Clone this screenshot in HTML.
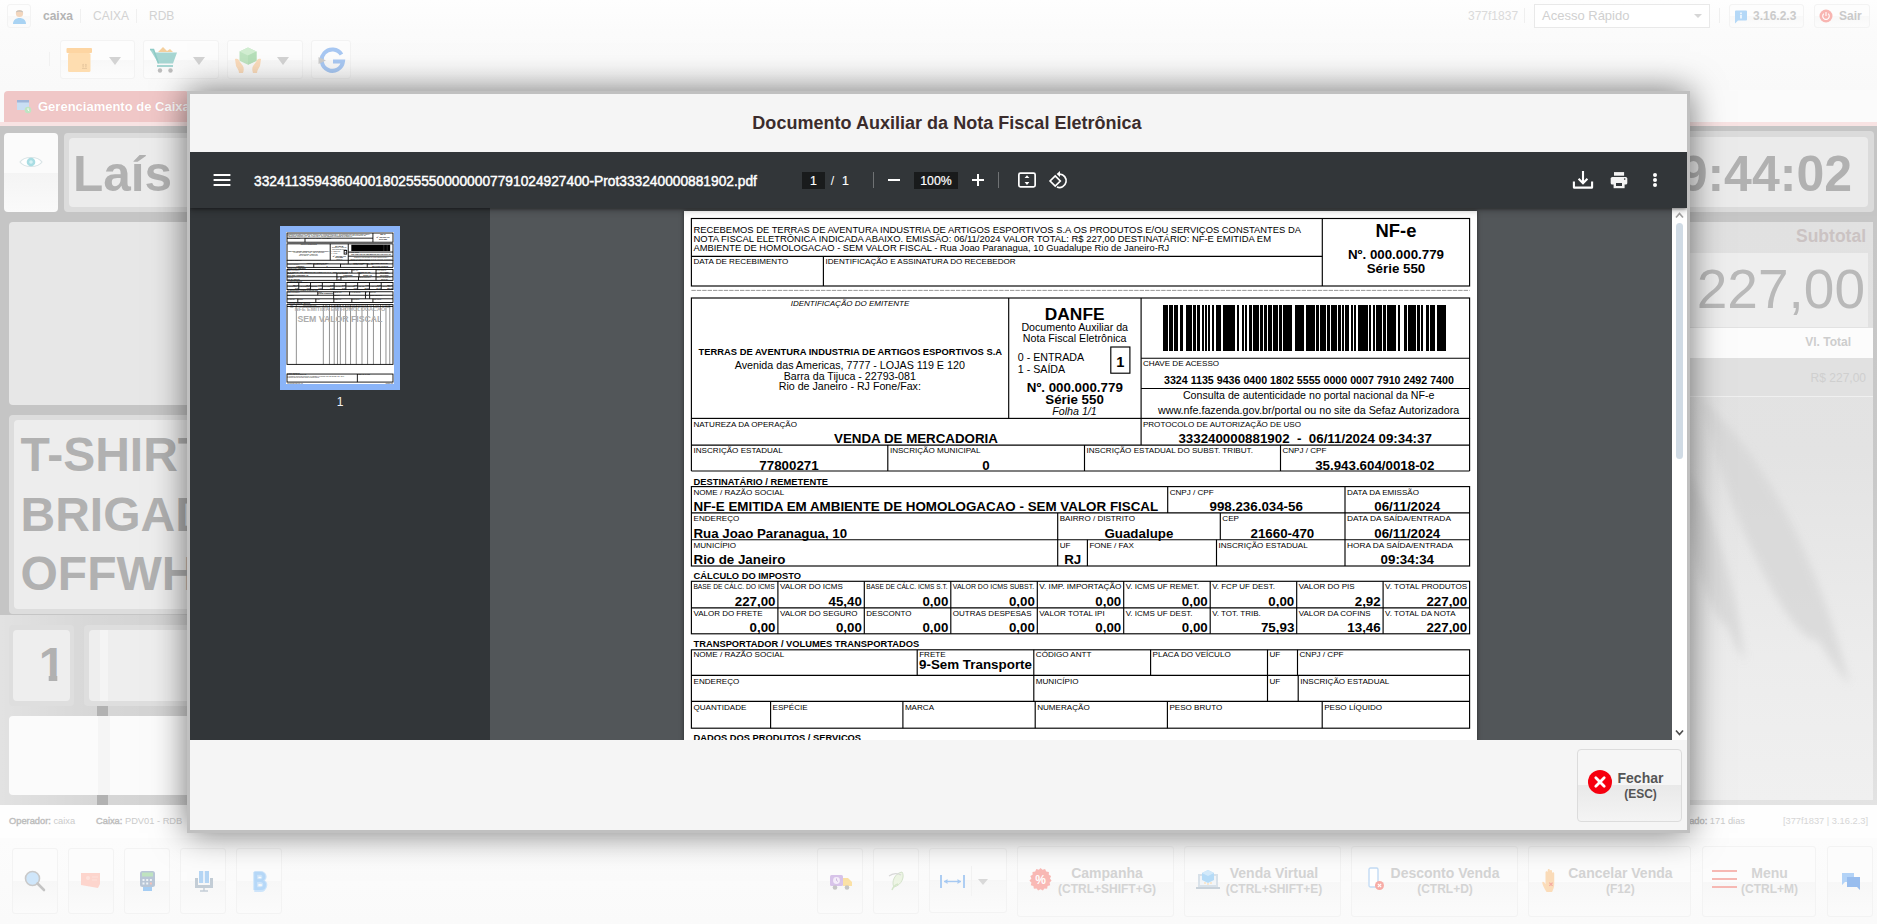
<!DOCTYPE html>
<html lang="pt-BR">
<head>
<meta charset="utf-8">
<title>Documento Auxiliar da Nota Fiscal Eletrônica</title>
<style>
*{box-sizing:border-box;margin:0;padding:0}
html,body{width:1877px;height:924px;overflow:hidden}
body{position:relative;background:#fbfbfb;font-family:"Liberation Sans",Arial,sans-serif;font-size:12px;color:#333}
.a{position:absolute}
svg text{font-family:"Liberation Sans",Arial,sans-serif}

/* ---------- background app (washed out by overlay) ---------- */
#topbar{left:0;top:0;width:1877px;height:32px;background:linear-gradient(#fefefe,#fbfbfb)}
#toolbar{left:0;top:32px;width:1877px;height:58px;background:linear-gradient(#fbfbfb,#f9f9f9)}
.fbtn{border:1px solid #f3f3f3;border-radius:3px;background:linear-gradient(#fdfdfd 0,#fdfdfd 50%,#f8f8f8 50%,#fcfcfc 100%)}
.navtxt{top:8.400px;font-size:12px;line-height:16px;color:#d2d2d2;white-space:nowrap}
.tri{width:0;height:0;border-left:6px solid transparent;border-right:6px solid transparent;border-top:8px solid #d3d3d3}
#tab{left:4px;top:91px;width:185px;overflow:hidden;height:31px;background:#f0c7c7;border-radius:4px 4px 0 0;color:#fff;font-weight:bold;font-size:13px;line-height:31px;padding-left:34px;white-space:nowrap;text-shadow:0 0 1px #e8b0b0}
#tabline{left:0;top:122px;width:1877px;height:4px;background:#f8e3e3}
#gray{left:0;top:126px;width:1877px;height:679px;background:#c5c5c5}
.pn{border-radius:4px}
.big{font-weight:bold;color:#b1b1b1;white-space:nowrap;letter-spacing:0}
#status{left:0;top:805px;width:1877px;height:33px;background:#fefefe;font-size:9.300px;color:#cbcbcb}
#status b{color:#bdbdbd;font-weight:normal;-webkit-text-stroke:.4px #bdbdbd}
#bottombar{left:0;top:838px;width:1877px;height:86px;background:linear-gradient(#fcfcfc,#fafafa)}
.bb{border:1px solid #f3f3f3;border-radius:3px;background:linear-gradient(#fcfcfc 0,#fcfcfc 50%,#f7f7f7 50%,#fbfbfb 100%)}
.bbt{font-weight:bold;font-size:14px;line-height:16px;color:#d4d4d4;text-align:center;white-space:nowrap}
.bbt small{font-size:12px;display:block;line-height:14px;position:relative;top:.6px}

/* ---------- dialog ---------- */
#dlg{left:187px;top:91px;width:1503px;height:742px;border:3px solid #c0c0c0;background:#f5f5f5;box-shadow:0 0 32px rgba(0,0,0,.55)}
#dtitle{left:0;top:0;width:1497px;padding-left:17px;height:58px;text-align:center;font-weight:bold;font-size:18px;line-height:58px;color:#3b2c2c;letter-spacing:.02px}
#viewer{left:0;top:58px;width:1497px;height:588px;background:#525659;overflow:hidden}
#vtb{left:0;top:0;width:1497px;height:56px;background:#323639;box-shadow:0 1px 3px rgba(0,0,0,.4),0 3px 7px rgba(0,0,0,.2);z-index:3;color:#fff}
#side{left:0;top:56px;width:300px;height:532px;background:#323639;z-index:2}
#sbar{left:1482px;top:56px;width:15px;height:532px;background:#fff;z-index:2}
#sthumb{left:4px;top:15px;width:7px;height:236px;border-radius:4px;background:#d0dbe5}
#fname{left:64px;top:19.500px;font-size:13.75px;line-height:20px;white-space:nowrap;color:#fff;-webkit-text-stroke:.45px #fff}
.tbox{background:#191b1c;color:#fff;font-size:12.3px;line-height:19px;text-align:center;height:17px;top:20px;-webkit-text-stroke:.2px #fff}
.sep{width:1px;height:16px;top:20px;background:rgba(255,255,255,.3)}
#pagewrap{left:494px;top:59px;width:793px;height:1122px;background:#fff;box-shadow:0 0 4px rgba(0,0,0,.5)}
#thumbsel{left:90px;top:132px;width:120px;height:164px;background:#8ab4f8}
#thumbpg{left:6px;top:6px;width:108px;height:152px;background:#fff;overflow:hidden}
#thumblab{left:90px;top:304px;width:120px;text-align:center;font-size:12px;line-height:14px;color:#f1f3f4}
#fechar{left:1387px;top:655px;width:105px;height:73px;border:1px solid #dcdcdc;border-radius:4px;background:linear-gradient(#f6f6f6 0,#f6f6f6 50%,#e9e9e9 50%,#f4f4f4 100%)}
#fechar .t{left:31.500px;top:20px;width:62px;text-align:center;font-weight:bold;font-size:14px;line-height:16px;color:#555}
#fechar .t small{display:block;font-size:12px;line-height:14px;position:relative;top:.7px}

</style>
</head>
<body>
<!-- ======== background application (dimmed by modal overlay) ======== -->
<div id="topbar" class="a"></div>
<div id="toolbar" class="a"></div>
<!-- top nav -->
<div class="a fbtn" style="left:7px;top:4px;width:24px;height:24px">
  <svg class="a" style="left:4px;top:3px" width="15" height="17" viewBox="0 0 15 17"><circle cx="7.5" cy="5.5" r="3.6" fill="#f3d6bd"/><path d="M3.8 4.6C4 1.6 11 1.6 11.2 4.6 9.5 3.4 5.5 3.4 3.8 4.6z" fill="#c9c2bb"/><path d="M1 16c0-4 3-6 6.500-6S14 12 14 16z" fill="#a9d3f3"/></svg>
</div>
<div class="a navtxt" style="left:43px;color:#b4b4b4;font-weight:bold">caixa</div>
<div class="a" style="left:80px;top:9px;width:1px;height:14px;background:#f0f0f0"></div>
<div class="a navtxt" style="left:93px">CAIXA</div>
<div class="a" style="left:136px;top:9px;width:1px;height:14px;background:#f0f0f0"></div>
<div class="a navtxt" style="left:149px">RDB</div>
<div class="a navtxt" style="left:1468px;font-size:12px;color:#dadada">377f1837</div>
<div class="a" style="left:1524px;top:8px;width:1px;height:15px;background:#efefef"></div>
<div class="a" style="left:1534px;top:4px;width:176px;height:24px;border:1px solid #e9e9e9;background:#fff;font-size:13px;line-height:22px;padding-left:7px;color:#d0d0d0">Acesso Rápido</div>
<div class="a tri" style="left:1694px;top:14px;border-left-width:4px;border-right-width:4px;border-top-width:4px;border-top-color:#d6d6d6"></div>
<div class="a" style="left:1719px;top:8px;width:1px;height:15px;background:#efefef"></div>
<div class="a fbtn" style="left:1729px;top:4px;width:75px;height:24px">
  <svg class="a" style="left:4px;top:5px" width="14" height="14" viewBox="0 0 14 14"><path d="M1 1.500a1 1 0 0 1 1-1h10a1 1 0 0 1 1 1v8a1 1 0 0 1-1 1H4l-3 3z" fill="#b4d8f7"/><path d="M6.300 2.500h1.400v1.400H6.300zM6.300 4.800h1.400v3.600H6.300z" fill="#fff"/></svg>
  <div class="a" style="left:23px;top:4px;font-size:12px;line-height:15px;font-weight:bold;color:#cbcbcb">3.16.2.3</div>
</div>
<div class="a fbtn" style="left:1814px;top:4px;width:56px;height:24px">
  <svg class="a" style="left:4px;top:4px" width="14" height="14" viewBox="0 0 14 14"><circle cx="7" cy="7" r="6.500" fill="#f8b5b1"/><path d="M4.800 4.600A3.300 3.300 0 1 0 9.200 4.600M7 3v4" fill="none" stroke="#fff" stroke-width="1.100"/></svg>
  <div class="a" style="left:24px;top:4px;font-size:12px;line-height:15px;font-weight:bold;color:#c9c9c9">Sair</div>
</div>
<!-- toolbar buttons -->
<div class="a" style="left:49px;top:52px;width:1px;height:14px;background:#f1f1f1"></div>
<div class="a fbtn" style="left:60px;top:40px;width:75px;height:39px">
  <svg class="a" style="left:5px;top:7px" width="27" height="25" viewBox="0 0 27 25"><rect x=".5" y="0" width="25.500" height="5" rx="1" fill="#fdd5a2"/><rect x="2" y="5" width="22.500" height="19" rx="1.500" fill="#feddb0"/><path d="M16 20h5v.8h-5zM16.600 19.500h1v-2.500h-1zM19.400 19.500h1v-2.500h-1zM17.100 15.800l1.200 1.400h-2.400zM19.900 15.800l1.200 1.400h-2.400z" fill="#e3c39b"/></svg>
  <div class="a tri" style="left:48px;top:16px"></div>
</div>
<div class="a fbtn" style="left:143px;top:40px;width:76px;height:39px">
  <svg class="a" style="left:5px;top:5px" width="29" height="28" viewBox="0 0 29 28"><path d="M9 6 14 1l4 4 3-2 3 3z" fill="#f4cf9d"/><path d="M1 3.500h3.500L6 6.500h22l-4 11H9.500z" fill="#a7d6d2"/><path d="M1 3.500h3.500l5 14" stroke="#8ecbc6" stroke-width="1.600" fill="none"/><rect x="8" y="19" width="16" height="2" fill="#a7d6d2"/><circle cx="11" cy="24.500" r="2.200" fill="#bdbdbd"/><circle cx="21.500" cy="24.500" r="2.200" fill="#bdbdbd"/></svg>
  <div class="a tri" style="left:49px;top:16px"></div>
</div>
<div class="a fbtn" style="left:227px;top:40px;width:76px;height:39px">
  <svg class="a" style="left:6px;top:6px" width="28" height="27" viewBox="0 0 28 27"><path d="M5.500 4.500 14 .5l8.500 4v9.300L14 17.800l-8.500-4z" fill="#bfe4c1"/><path d="M5.500 4.500 14 8.500l8.500-4L14 .5z" fill="#d2eed2"/><path d="M14 8.500v9.300l8.500-4V4.500z" fill="#b6dfb9"/><path d="M1 12c2-1 4 0 5 3l3 4c1 2 1 4 0 7H5c0-3-2-5-3-7z" fill="#fbdcbc"/><path d="M27 12c-2-1-4 0-5 3l-3 4c-1 2-1 4 0 7h4c0-3 2-5 3-7z" fill="#fbdcbc"/></svg>
  <div class="a tri" style="left:49px;top:16px"></div>
</div>
<div class="a fbtn" style="left:311px;top:40px;width:40px;height:39px">
  <svg class="a" style="left:5px;top:5px" width="30" height="28" viewBox="0 0 30 28"><path d="M24.500 8.500A10.700 10.700 0 1 0 26 15.500H16" fill="none" stroke="#a8c8f3" stroke-width="4"/><path d="M1.500 11 9 14.500 1.500 18z" fill="#cdcdcd"/></svg>
</div>
<!-- tab strip -->
<div id="tab" class="a">Gerenciamento de Caixa
  <svg class="a" style="left:13px;top:9px" width="15" height="14" viewBox="0 0 15 14"><rect x="0" y="0" width="12" height="10" fill="#c9def3"/><rect x="0" y="0" width="12" height="2.500" fill="#9fb5d9"/><circle cx="11" cy="10" r="3.300" fill="#bfe5c3"/><path d="M11 8.200V10l1.200 1" stroke="#fff" stroke-width=".9" fill="none"/></svg>
</div>
<div id="tabline" class="a"></div>
<!-- main gray work area -->
<div id="gray" class="a">
  <!-- left column -->
  <div class="a" style="left:0;top:489px;width:200px;height:190px;background:linear-gradient(90deg,rgba(255,255,255,.5),rgba(255,255,255,.32) 45%,rgba(255,255,255,.2))"></div>
  <div class="a" style="left:97px;top:575px;width:11px;height:104px;background:#b2b2b2"></div>
  <div class="a pn" style="left:4px;top:7px;width:54px;height:79px;background:linear-gradient(#fbfbfb 0,#fbfbfb 50%,#f4f4f4 50%,#fafafa 100%)">
    <svg class="a" style="left:15px;top:22px" width="24" height="14" viewBox="0 0 24 14"><path d="M1 7C5 1 19 1 23 7 19 13 5 13 1 7z" fill="#fff" stroke="#d9e4e6" stroke-width="1.200"/><circle cx="12" cy="7" r="4.300" fill="#a9dde3"/><circle cx="12" cy="7" r="1.800" fill="#d6f1f4"/></svg>
  </div>
  <div class="a pn" style="left:64px;top:7px;width:1000px;height:79px;background:#dcdcdc"></div>
  <div class="a pn" style="left:69px;top:12px;width:990px;height:69px;background:#ececec"></div>
  <div class="a big" style="left:73px;top:17.500px;font-size:49.500px;line-height:60px">Laís</div>
  <div class="a pn" style="left:9px;top:96px;width:1000px;height:183px;background:#e7e7e7"></div>
  <div class="a pn" style="left:9px;top:289px;width:1000px;height:199px;background:#dddddd"></div>
  <div class="a pn" style="left:14px;top:294px;width:990px;height:189px;background:#ededed"></div>
  <div class="a big" style="left:20.500px;top:299px;font-size:48px;line-height:59.500px">T-SHIRT<br>BRIGADEIRO<br>OFFWHITE</div>
  <div class="a pn" style="left:9px;top:499px;width:65px;height:81px;background:#dedede"></div>
  <div class="a pn" style="left:13px;top:504px;width:57px;height:71px;background:#eeeeee"></div>
  <div class="a big" style="left:30.500px;top:511px;width:43px;text-align:center;font-size:48px;line-height:56px;clip-path:polygon(0 0,43px 0,43px 38px,26.800px 38px,26.800px 56px,18.200px 56px,18.200px 38px,0 38px)">1</div>
  <div class="a pn" style="left:84px;top:499px;width:300px;height:81px;background:#dedede"></div>
  <div class="a pn" style="left:89px;top:504px;width:290px;height:71px;background:#eeeeee"></div>
  <div class="a pn" style="left:9px;top:590px;width:1000px;height:79px;background:#fbfbfb"></div>
  <div class="a" style="left:98px;top:590px;width:12px;height:79px;background:rgba(0,0,0,.025)"></div><div class="a" style="left:100px;top:504px;width:8px;height:71px;background:rgba(255,255,255,.35)"></div>
  
  <!-- right column -->
  <div class="a pn" style="left:1500px;top:5px;width:374px;height:81px;background:#dbdbdb"></div>
  <div class="a pn" style="left:1500px;top:11px;width:368px;height:70px;background:#ebebeb"></div>
  <div class="a big" style="left:1500px;top:17.500px;width:352px;text-align:right;font-size:50px;line-height:60px">09:44:02</div>
  <div class="a" style="left:1600px;top:90px;width:277px;height:589px;background:linear-gradient(#c6c6c6 0,#c9c9c9 45%,#d6d6d6 75%,#e3e3e3 100%)"></div>
  <div class="a" style="left:1600px;top:96px;width:273px;height:578px;background:linear-gradient(#e1e1e1 0,#e3e3e3 40%,#ececec 75%,#f0f0f0 100%)"></div>
  <div class="a" style="left:1600px;top:100px;width:266px;text-align:right;font-weight:bold;font-size:17.5px;line-height:20px;color:#cbc3c3">Subtotal</div>
  <div class="a" style="left:1600px;top:127px;width:268px;height:74px;background:#eeeeee"></div>
  <div class="a" style="left:1600px;top:132px;width:265px;text-align:right;font-size:55px;line-height:62px;color:#b9b9b9">227,00</div>
  <div class="a" style="left:1600px;top:202px;width:273px;height:30px;background:#fcfcfc"></div>
  <div class="a" style="left:1600px;top:209px;width:251px;text-align:right;font-weight:bold;font-size:12px;line-height:14px;color:#cdcdcd">Vl. Total</div>
  <div class="a" style="left:1600px;top:232px;width:273px;height:38px;background:#e1e1e1"></div>
  <div class="a" style="left:1600px;top:270px;width:273px;height:1px;background:#f0f0f0"></div>
  <div class="a" style="left:1600px;top:245px;width:266px;text-align:right;font-size:12px;line-height:14px;color:#cfcfcf">R$ 227,00</div>
  <!-- palm leaf shadow -->
  <svg class="a" style="left:1688px;top:271px" width="185" height="403" viewBox="1688 397 185 403"><defs><filter id="pb" x="-20%" y="-20%" width="140%" height="140%"><feGaussianBlur stdDeviation="4.500"/></filter></defs><g filter="url(#pb)" fill="#d6d6d6" opacity=".75"><path d="M1702 400C1765 455 1818 560 1850 685 1838 672 1828 655 1818 640 1800 640 1775 600 1750 545 1728 500 1712 440 1702 400z"/><path d="M1688 470C1714 515 1738 590 1745 662 1738 652 1733 640 1728 628 1716 620 1705 590 1696 560 1692 540 1689 520 1688 505z"/></g></svg>
</div>
<!-- status bar -->
<div id="status" class="a">
  <div class="a" style="left:9px;top:11px;white-space:nowrap"><b>Operador:</b> caixa</div>
  <div class="a" style="left:96px;top:11px;white-space:nowrap"><b>Caixa:</b> PDV01 - RDB</div>
  <div class="a" style="left:1560px;top:11px;width:185px;text-align:right;white-space:nowrap"><b>Certificado:</b> 171 dias</div>
  <div class="a" style="left:1700px;top:11px;width:168px;text-align:right;white-space:nowrap;color:#d6d6d6">[377f1837 | 3.16.2.3]</div>
</div>
<!-- bottom toolbar -->
<div id="bottombar" class="a">
  <div class="a bb" style="left:12px;top:10px;width:46px;height:66px"><svg class="a" style="left:11px;top:21px" width="22" height="22" viewBox="0 0 22 22"><circle cx="8.500" cy="8.500" r="7" fill="#cfe6fa" stroke="#c9c9c9" stroke-width="1.600"/><path d="M13.500 13.500 20 20" stroke="#c4c4c4" stroke-width="2.600" stroke-linecap="round"/></svg></div>
  <div class="a bb" style="left:68px;top:10px;width:46px;height:66px"><svg class="a" style="left:11px;top:22.500px" width="22" height="18" viewBox="0 0 22 18"><path d="M1 1h19v11l-2 4-17-3z" fill="#fdd5cd"/><circle cx="8" cy="6" r="2" fill="#fde2dc"/><path d="M12 5h6M12 8h5" stroke="#fde2dc" stroke-width="1.200"/></svg></div>
  <div class="a bb" style="left:124px;top:10px;width:46px;height:66px"><svg class="a" style="left:14px;top:21px" width="17" height="22" viewBox="0 0 17 22"><rect x="1" y="1" width="15" height="16" rx="2.500" fill="#b9c6d6"/><rect x="3" y="2.500" width="11" height="4" fill="#bfe3bf"/><path d="M3.500 9h2v2h-2zm3.700 0h2v2h-2zm3.700 0h2v2h-2zM3.500 12.500h2v2h-2zm3.700 0h2v2h-2z" fill="#eef2f6"/><rect x="10.900" y="12.500" width="2" height="2" fill="#f7c0b8"/><rect x="4" y="17" width="9" height="4" fill="#a5cdf3"/></svg></div>
  <div class="a bb" style="left:180px;top:10px;width:46px;height:66px"><svg class="a" style="left:13px;top:21px" width="20" height="22" viewBox="0 0 20 22"><rect x="5" y="1" width="10" height="12" fill="#b5d6f5"/><rect x="9" y="1" width="2" height="12" fill="#e9f2fb"/><path d="M1 8h3v7h12V8h3v10H1z" fill="#c3cdd6"/><path d="M6 21h8M10 18v3" stroke="#c3cdd6" stroke-width="1.400"/></svg></div>
  <div class="a bb" style="left:236px;top:10px;width:46px;height:66px"><div class="a" style="left:11px;top:18px;width:24px;text-align:center;font-weight:bold;font-size:26px;line-height:28px;color:#b6d8f8;transform:scaleX(.74);text-shadow:0 0 2px #c6e0f9,1.500px 0 0 #cfe5fa,-1.500px 0 0 #cfe5fa,0 1.500px 0 #cfe5fa,0 -1.500px 0 #cfe5fa">B</div></div>

  <div class="a bb" style="left:817px;top:10px;width:46px;height:66px"><svg class="a" style="left:11px;top:25px" width="24" height="17" viewBox="0 0 24 17"><rect x="1" y="1" width="13" height="11" rx="1.500" fill="#d8c4ea"/><path d="M14 4h5l4 4v4h-9z" fill="#fbe1a6"/><circle cx="7.500" cy="6.500" r="3.400" fill="#f5eefa"/><path d="M7.500 4.500v2l1.500 1" stroke="#c9b3dd" stroke-width=".9" fill="none"/><circle cx="6" cy="13.500" r="2.300" fill="#c6c6c6"/><circle cx="18" cy="13.500" r="2.300" fill="#c6c6c6"/></svg></div>
  <div class="a bb" style="left:873px;top:10px;width:46px;height:66px"><svg class="a" style="left:12px;top:21px" width="22" height="22" viewBox="0 0 22 22"><path d="M8 17C5 12 9 3 16 2c3 4 0 13-8 15z" fill="#edf5e4" stroke="#d5e3cc" stroke-width="1"/><path d="M3 6c4-3 9-3 12-1" stroke="#d9d9d9" stroke-width="1.200" fill="none"/><path d="M6 20c1-3 3-5 6-6" stroke="#d4e6c9" stroke-width="1.400" fill="none"/></svg></div>
  <div class="a bb" style="left:929px;top:10px;width:78px;height:65px">
    <svg class="a" style="left:10px;top:26px" width="25" height="13" viewBox="0 0 25 13"><path d="M1 0v13M24 0v13" stroke="#a6c9f2" stroke-width="1.800"/><path d="M4 6.500h17" stroke="#a6c9f2" stroke-width="1.400"/><path d="M4 6.500 7.500 4v5zM21 6.500 17.500 4v5z" fill="#a6c9f2"/></svg>
    <div class="a" style="left:41px;top:17px;width:1px;height:30px;background:#f3f3f3"></div>
    <div class="a tri" style="left:48px;top:30px;border-left-width:5px;border-right-width:5px;border-top-width:6px;border-top-color:#d9d9d9"></div>
  </div>
  <div class="a bb" style="left:1017px;top:8px;width:157px;height:71px">
    <svg class="a" style="left:11px;top:21px" width="23" height="23" viewBox="0 0 23 23"><path d="M11.500 0l2 1.800 2.600-.7 1.100 2.500 2.700.4-.1 2.700 2.300 1.400-1.100 2.500 1.600 2.200-2 1.800.6 2.600-2.600.8-.5 2.700-2.700-.3-1.500 2.200-2.400-1.300-2.400 1.300-1.500-2.200-2.700.3-.5-2.700-2.600-.8.600-2.600-2-1.800L2.400 10.600 1.300 8.100l2.300-1.400-.1-2.700 2.700-.4 1.100-2.500 2.600.7z" fill="#f9b9b5"/><text x="11.500" y="16" text-anchor="middle" font-size="12" font-weight="bold" fill="#fff">%</text></svg>
    <div class="a bbt" style="left:36px;top:18.300px;width:106px">Campanha<small>(CTRL+SHIFT+G)</small></div>
  </div>
  <div class="a bb" style="left:1184px;top:8px;width:157px;height:71px">
    <svg class="a" style="left:11px;top:22px" width="24" height="21" viewBox="0 0 24 21"><rect x="2" y="5" width="20" height="13" fill="#d9e2ea"/><rect x="4" y="7" width="16" height="9" fill="#f2f5f8"/><path d="M0 18h24v2H0z" fill="#c9d2da"/><path d="M6 4 12 1l6 3v7l-6 3-6-3z" fill="#b6dcf8"/><path d="M6 4l6 3 6-3-6-3z" fill="#d3eafb"/><path d="M9 13v2M12 14v2M15 13v2" stroke="#fbd9a9" stroke-width="1"/></svg>
    <div class="a bbt" style="left:36px;top:18.300px;width:106px">Venda Virtual<small>(CTRL+SHIFT+E)</small></div>
  </div>
  <div class="a bb" style="left:1351px;top:8px;width:167px;height:71px">
    <svg class="a" style="left:16px;top:20px" width="18" height="25" viewBox="0 0 18 25"><rect x="1" y="1" width="9" height="19" rx="1.500" fill="#fff" stroke="#c4dcf5" stroke-width="1.400"/><circle cx="11.500" cy="18.500" r="4.500" fill="#f7aca6"/><path d="M9.800 16.800l3.400 3.400M13.200 16.800l-3.400 3.400" stroke="#fff" stroke-width="1.100"/></svg>
    <div class="a bbt" style="left:32px;top:18.300px;width:122px">Desconto Venda<small>(CTRL+D)</small></div>
  </div>
  <div class="a bb" style="left:1528px;top:8px;width:163px;height:71px">
    <svg class="a" style="left:12px;top:21px" width="21" height="25" viewBox="0 0 19 23"><path d="M5 22c-2-3-4-7-4-9 1-1 2 0 3 2V4c0-1.500 2-1.500 2 0v6V2c0-1.500 2-1.500 2 0v8V3c0-1.500 2-1.500 2 0v8V5c0-1.500 2-1.500 2 0v10c0 3-1 5-2 7z" fill="#fbdcb9"/><path d="M7.500 13.500l3 3M10.500 13.500l-3 3" stroke="#f4a8a0" stroke-width="1.100"/></svg>
    <div class="a bbt" style="left:27.400px;top:18.300px;width:128px">Cancelar Venda<small>(F12)</small></div>
  </div>
  <div class="a bb" style="left:1702px;top:8px;width:114px;height:71px">
    <div class="a" style="left:9px;top:23px;width:25px;height:2px;background:#f6b8b3"></div>
    <div class="a" style="left:9px;top:31px;width:25px;height:2px;background:#f6b8b3"></div>
    <div class="a" style="left:9px;top:39px;width:25px;height:2px;background:#f6b8b3"></div>
    <div class="a bbt" style="left:34.600px;top:18.300px;width:64px">Menu<small>(CTRL+M)</small></div>
  </div>
  <div class="a bb" style="left:1827px;top:8px;width:46px;height:71px"><svg class="a" style="left:13px;top:25px" width="20" height="19" viewBox="0 0 20 19"><path d="M1 1h12v9H4l-3 3z" fill="#b3d3f7"/><path d="M6 5h13v10l0 3-3-3H6z" fill="#98bdee"/></svg></div>
</div>

<div id="dlg" class="a">
  <div id="dtitle" class="a">Documento Auxiliar da Nota Fiscal Eletrônica</div>
  <div id="viewer" class="a">
    <!-- pdf page -->
    <div id="pagewrap" class="a">
      <svg class="a" style="left:0;top:0" width="793" height="1122" viewBox="684 211 793 1122">
<rect x="691.4" y="218.5" width="778.2" height="67.5" fill="none" stroke="#000" stroke-width="1.15"/>
<line x1="1322.3" y1="218.5" x2="1322.3" y2="286.0" stroke="#000" stroke-width="1.15"/>
<line x1="691.4" y1="256.4" x2="1322.3" y2="256.4" stroke="#000" stroke-width="1.15"/>
<line x1="823.4" y1="256.4" x2="823.4" y2="286.0" stroke="#000" stroke-width="1.15"/>
<text x="693.5" y="232.7" font-size="9.33" textLength="607.5" lengthAdjust="spacingAndGlyphs">RECEBEMOS DE TERRAS DE AVENTURA INDUSTRIA DE ARTIGOS ESPORTIVOS S.A OS PRODUTOS E/OU SERVIÇOS CONSTANTES DA</text>
<text x="693.5" y="242.0" font-size="9.33" textLength="577.5" lengthAdjust="spacingAndGlyphs">NOTA FISCAL ELETRÔNICA INDICADA ABAIXO. EMISSÃO: 06/11/2024 VALOR TOTAL: R$ 227,00 DESTINATÁRIO: NF-E EMITIDA EM</text>
<text x="693.5" y="250.9" font-size="9.33" textLength="475.7" lengthAdjust="spacingAndGlyphs">AMBIENTE DE HOMOLOGACAO - SEM VALOR FISCAL - Rua Joao Paranagua, 10 Guadalupe Rio de Janeiro-RJ</text>
<text x="693.5" y="264.2" font-size="8.08">DATA DE RECEBIMENTO</text>
<text x="825.5" y="264.2" font-size="8.08">IDENTIFICAÇÃO E ASSINATURA DO RECEBEDOR</text>
<text x="1396.0" y="236.7" font-size="18.4" text-anchor="middle" font-weight="bold">NF-e</text>
<text x="1396.0" y="258.7" font-size="13.33" text-anchor="middle" font-weight="bold">Nº. 000.000.779</text>
<text x="1396.0" y="272.5" font-size="13.33" text-anchor="middle" font-weight="bold">Série 550</text>
<line x1="691.4" y1="290.4" x2="1469.6" y2="290.4" stroke="#8c8c8c" stroke-width="0.9" stroke-dasharray="4.4 1"/>
<rect x="691.4" y="298.0" width="778.2" height="120.4" fill="none" stroke="#000" stroke-width="1.15"/>
<line x1="1008.7" y1="298.0" x2="1008.7" y2="418.4" stroke="#000" stroke-width="1.15"/>
<line x1="1141.1" y1="298.0" x2="1141.1" y2="445.1" stroke="#000" stroke-width="1.15"/>
<line x1="1141.1" y1="358.2" x2="1469.6" y2="358.2" stroke="#000" stroke-width="1.15"/>
<line x1="1141.1" y1="388.5" x2="1469.6" y2="388.5" stroke="#000" stroke-width="1.15"/>
<text x="850.0" y="306.0" font-size="8" text-anchor="middle" font-style="italic">IDENTIFICAÇÃO DO EMITENTE</text>
<text x="850.3" y="354.7" font-size="9.33" text-anchor="middle" font-weight="bold" textLength="303.5" lengthAdjust="spacingAndGlyphs">TERRAS DE AVENTURA INDUSTRIA DE ARTIGOS ESPORTIVOS S.A</text>
<text x="849.8" y="368.6" font-size="10.67" text-anchor="middle" textLength="230.2" lengthAdjust="spacingAndGlyphs">Avenida das Americas, 7777 - LOJAS 119 E 120</text>
<text x="849.8" y="379.8" font-size="10.67" text-anchor="middle">Barra da Tijuca - 22793-081</text>
<text x="849.8" y="389.9" font-size="10.67" text-anchor="middle">Rio de Janeiro - RJ Fone/Fax:</text>
<text x="1074.7" y="319.6" font-size="17.33" text-anchor="middle" font-weight="bold">DANFE</text>
<text x="1074.7" y="330.9" font-size="10.67" text-anchor="middle">Documento Auxiliar da</text>
<text x="1074.7" y="341.8" font-size="10.67" text-anchor="middle">Nota Fiscal Eletrônica</text>
<text x="1017.8" y="360.8" font-size="10.67">0 - ENTRADA</text>
<text x="1017.8" y="372.9" font-size="10.67">1 - SAÍDA</text>
<rect x="1110.8" y="347.0" width="19.1" height="26.2" fill="none" stroke="#000" stroke-width="1.15"/>
<text x="1120.4" y="367.4" font-size="14.67" text-anchor="middle" font-weight="bold">1</text>
<text x="1074.8" y="392.3" font-size="13.33" text-anchor="middle" font-weight="bold">Nº. 000.000.779</text>
<text x="1074.6" y="404.4" font-size="13.33" text-anchor="middle" font-weight="bold">Série 550</text>
<text x="1074.5" y="414.8" font-size="10.67" text-anchor="middle" font-style="italic">Folha 1/1</text>
<path d="M1163 305h5v45.5h-5zM1169 305h4v45.5h-4zM1174 305h4v45.5h-4zM1180 305h3v45.5h-3zM1186 305h6v45.5h-6zM1193 305h3v45.5h-3zM1197 305h3v45.5h-3zM1202 305h2v45.5h-2zM1205 305h2v45.5h-2zM1208 305h2v45.5h-2zM1212 305h2v45.5h-2zM1216 305h5v45.5h-5zM1223 305h12v45.5h-12zM1237 305h2v45.5h-2zM1242 305h2v45.5h-2zM1245 305h2v45.5h-2zM1249 305h3v45.5h-3zM1253 305h6v45.5h-6zM1260 305h3v45.5h-3zM1264 305h3v45.5h-3zM1268 305h4v45.5h-4zM1273 305h5v45.5h-5zM1279 305h3v45.5h-3zM1283 305h9v45.5h-9zM1295 305h9v45.5h-9zM1306 305h9v45.5h-9zM1316 305h3v45.5h-3zM1320 305h6v45.5h-6zM1327 305h3v45.5h-3zM1331 305h6v45.5h-6zM1338 305h3v45.5h-3zM1342 305h2v45.5h-2zM1345 305h4v45.5h-4zM1351 305h2v45.5h-2zM1354 305h2v45.5h-2zM1358 305h10v45.5h-10zM1369 305h2v45.5h-2zM1373 305h2v45.5h-2zM1376 305h6v45.5h-6zM1383 305h3v45.5h-3zM1387 305h9v45.5h-9zM1398 305h2v45.5h-2zM1404 305h3v45.5h-3zM1408 305h8v45.5h-8zM1417 305h3v45.5h-3zM1421 305h2v45.5h-2zM1426 305h3v45.5h-3zM1430 305h5v45.5h-5zM1437 305h9v45.5h-9z" fill="#000" shape-rendering="crispEdges"/>
<text x="1142.9" y="366.0" font-size="8.08">CHAVE DE ACESSO</text>
<text x="1164.0" y="383.6" font-size="10.67" font-weight="bold" textLength="289.9" lengthAdjust="spacingAndGlyphs">3324 1135 9436 0400 1802 5555 0000 0007 7910 2492 7400</text>
<text x="1308.7" y="398.9" font-size="10.67" text-anchor="middle" textLength="251.5" lengthAdjust="spacingAndGlyphs">Consulta de autenticidade no portal nacional da NF-e</text>
<text x="1308.6" y="413.6" font-size="10.67" text-anchor="middle" textLength="301.3" lengthAdjust="spacingAndGlyphs">www.nfe.fazenda.gov.br/portal ou no site da Sefaz Autorizadora</text>
<line x1="691.4" y1="445.1" x2="1469.6" y2="445.1" stroke="#000" stroke-width="1.15"/>
<line x1="691.4" y1="418.4" x2="691.4" y2="471.0" stroke="#000" stroke-width="1.15"/>
<line x1="1469.6" y1="418.4" x2="1469.6" y2="471.0" stroke="#000" stroke-width="1.15"/>
<line x1="691.4" y1="471.0" x2="1469.6" y2="471.0" stroke="#000" stroke-width="1.15"/>
<text x="693.5" y="427.0" font-size="8.08">NATUREZA DA OPERAÇÃO</text>
<text x="916.0" y="442.5" font-size="13.33" text-anchor="middle" font-weight="bold">VENDA DE MERCADORIA</text>
<text x="1142.9" y="426.6" font-size="8.08">PROTOCOLO DE AUTORIZAÇÃO DE USO</text>
<text x="1178.4" y="442.5" font-size="13.33" font-weight="bold" xml:space="preserve" textLength="253.5" lengthAdjust="spacingAndGlyphs">333240000881902  -  06/11/2024 09:34:37</text>
<line x1="887.8" y1="445.1" x2="887.8" y2="471.0" stroke="#000" stroke-width="1.15"/>
<line x1="1084.5" y1="445.1" x2="1084.5" y2="471.0" stroke="#000" stroke-width="1.15"/>
<line x1="1280.5" y1="445.1" x2="1280.5" y2="471.0" stroke="#000" stroke-width="1.15"/>
<text x="693.5" y="452.9" font-size="8.08">INSCRIÇÃO ESTADUAL</text>
<text x="789.0" y="469.5" font-size="13.33" text-anchor="middle" font-weight="bold">77800271</text>
<text x="889.9" y="452.9" font-size="8.08">INSCRIÇÃO MUNICIPAL</text>
<text x="986.0" y="469.5" font-size="13.33" text-anchor="middle" font-weight="bold">0</text>
<text x="1086.5" y="452.9" font-size="8.08">INSCRIÇÃO ESTADUAL DO SUBST. TRIBUT.</text>
<text x="1282.4" y="452.9" font-size="8.08">CNPJ / CPF</text>
<text x="1374.8" y="469.5" font-size="13.33" text-anchor="middle" font-weight="bold">35.943.604/0018-02</text>
<text x="693.5" y="484.6" font-size="9.33" font-weight="bold">DESTINATÁRIO / REMETENTE</text>
<rect x="691.4" y="486.6" width="778.2" height="79.4" fill="none" stroke="#000" stroke-width="1.15"/>
<line x1="691.4" y1="512.9" x2="1469.6" y2="512.9" stroke="#000" stroke-width="1.15"/>
<line x1="691.4" y1="539.7" x2="1469.6" y2="539.7" stroke="#000" stroke-width="1.15"/>
<line x1="1167.7" y1="486.6" x2="1167.7" y2="512.9" stroke="#000" stroke-width="1.15"/>
<line x1="1345.0" y1="486.6" x2="1345.0" y2="566.0" stroke="#000" stroke-width="1.15"/>
<line x1="1057.7" y1="512.9" x2="1057.7" y2="566.0" stroke="#000" stroke-width="1.15"/>
<line x1="1220.3" y1="512.9" x2="1220.3" y2="539.7" stroke="#000" stroke-width="1.15"/>
<line x1="1087.4" y1="539.7" x2="1087.4" y2="566.0" stroke="#000" stroke-width="1.15"/>
<line x1="1216.5" y1="539.7" x2="1216.5" y2="566.0" stroke="#000" stroke-width="1.15"/>
<text x="693.5" y="495.0" font-size="8.08">NOME / RAZÃO SOCIAL</text>
<text x="693.5" y="510.8" font-size="13.33" font-weight="bold" textLength="464.7" lengthAdjust="spacingAndGlyphs">NF-E EMITIDA EM AMBIENTE DE HOMOLOGACAO - SEM VALOR FISCAL</text>
<text x="1169.7" y="495.0" font-size="8.08">CNPJ / CPF</text>
<text x="1256.2" y="510.8" font-size="13.33" text-anchor="middle" font-weight="bold">998.236.034-56</text>
<text x="1347.0" y="495.0" font-size="8.08">DATA DA EMISSÃO</text>
<text x="1407.3" y="510.8" font-size="13.33" text-anchor="middle" font-weight="bold">06/11/2024</text>
<text x="693.5" y="521.0" font-size="8.08">ENDEREÇO</text>
<text x="693.5" y="537.5" font-size="13.33" font-weight="bold" textLength="153.6" lengthAdjust="spacingAndGlyphs">Rua Joao Paranagua, 10</text>
<text x="1059.7" y="521.0" font-size="8.08">BAIRRO / DISTRITO</text>
<text x="1138.9" y="537.5" font-size="13.33" text-anchor="middle" font-weight="bold">Guadalupe</text>
<text x="1222.3" y="521.0" font-size="8.08">CEP</text>
<text x="1282.4" y="537.5" font-size="13.33" text-anchor="middle" font-weight="bold">21660-470</text>
<text x="1347.0" y="521.0" font-size="8.08" textLength="104.0" lengthAdjust="spacingAndGlyphs">DATA DA SAÍDA/ENTRADA</text>
<text x="1407.3" y="537.5" font-size="13.33" text-anchor="middle" font-weight="bold">06/11/2024</text>
<text x="693.5" y="548.0" font-size="8.08">MUNICÍPIO</text>
<text x="693.5" y="563.6" font-size="13.33" font-weight="bold">Rio de Janeiro</text>
<text x="1059.7" y="548.0" font-size="8.08">UF</text>
<text x="1072.7" y="563.6" font-size="13.33" text-anchor="middle" font-weight="bold">RJ</text>
<text x="1089.4" y="548.0" font-size="8.08">FONE / FAX</text>
<text x="1218.5" y="548.0" font-size="8.08">INSCRIÇÃO ESTADUAL</text>
<text x="1347.0" y="548.0" font-size="8.08" textLength="106.0" lengthAdjust="spacingAndGlyphs">HORA DA SAÍDA/ENTRADA</text>
<text x="1407.3" y="563.6" font-size="13.33" text-anchor="middle" font-weight="bold">09:34:34</text>
<text x="693.5" y="579.0" font-size="9.33" font-weight="bold">CÁLCULO DO IMPOSTO</text>
<rect x="691.4" y="581.3" width="778.2" height="52.5" fill="none" stroke="#000" stroke-width="1.15"/>
<line x1="691.4" y1="607.8" x2="1469.6" y2="607.8" stroke="#000" stroke-width="1.15"/>
<line x1="777.9" y1="581.3" x2="777.9" y2="633.8" stroke="#000" stroke-width="1.15"/>
<line x1="864.3" y1="581.3" x2="864.3" y2="633.8" stroke="#000" stroke-width="1.15"/>
<line x1="950.8" y1="581.3" x2="950.8" y2="633.8" stroke="#000" stroke-width="1.15"/>
<line x1="1037.3" y1="581.3" x2="1037.3" y2="633.8" stroke="#000" stroke-width="1.15"/>
<line x1="1123.7" y1="581.3" x2="1123.7" y2="633.8" stroke="#000" stroke-width="1.15"/>
<line x1="1210.2" y1="581.3" x2="1210.2" y2="633.8" stroke="#000" stroke-width="1.15"/>
<line x1="1296.7" y1="581.3" x2="1296.7" y2="633.8" stroke="#000" stroke-width="1.15"/>
<line x1="1383.1" y1="581.3" x2="1383.1" y2="633.8" stroke="#000" stroke-width="1.15"/>
<text x="693.4" y="589.1" font-size="6.4" textLength="81.3" lengthAdjust="spacingAndGlyphs">BASE DE CÁLC. DO ICMS</text>
<text x="775.5" y="605.5" font-size="13.33" text-anchor="end" font-weight="bold">227,00</text>
<text x="779.9" y="589.1" font-size="8">VALOR DO ICMS</text>
<text x="861.9" y="605.5" font-size="13.33" text-anchor="end" font-weight="bold">45,40</text>
<text x="866.3" y="589.1" font-size="6.4" textLength="81.3" lengthAdjust="spacingAndGlyphs">BASE DE CÁLC. ICMS S.T.</text>
<text x="948.4" y="605.5" font-size="13.33" text-anchor="end" font-weight="bold">0,00</text>
<text x="952.8" y="589.1" font-size="6.4" textLength="81.3" lengthAdjust="spacingAndGlyphs">VALOR DO ICMS SUBST.</text>
<text x="1034.9" y="605.5" font-size="13.33" text-anchor="end" font-weight="bold">0,00</text>
<text x="1039.3" y="589.1" font-size="8" textLength="82.0" lengthAdjust="spacingAndGlyphs">V. IMP. IMPORTAÇÃO</text>
<text x="1121.3" y="605.5" font-size="13.33" text-anchor="end" font-weight="bold">0,00</text>
<text x="1125.7" y="589.1" font-size="8">V. ICMS UF REMET.</text>
<text x="1207.8" y="605.5" font-size="13.33" text-anchor="end" font-weight="bold">0,00</text>
<text x="1212.2" y="589.1" font-size="8">V. FCP UF DEST.</text>
<text x="1294.3" y="605.5" font-size="13.33" text-anchor="end" font-weight="bold">0,00</text>
<text x="1298.7" y="589.1" font-size="8">VALOR DO PIS</text>
<text x="1380.7" y="605.5" font-size="13.33" text-anchor="end" font-weight="bold">2,92</text>
<text x="1385.1" y="589.1" font-size="8" textLength="82.0" lengthAdjust="spacingAndGlyphs">V. TOTAL PRODUTOS</text>
<text x="1467.2" y="605.5" font-size="13.33" text-anchor="end" font-weight="bold">227,00</text>
<text x="693.4" y="616.0" font-size="8">VALOR DO FRETE</text>
<text x="775.5" y="631.9" font-size="13.33" text-anchor="end" font-weight="bold">0,00</text>
<text x="779.9" y="616.0" font-size="8">VALOR DO SEGURO</text>
<text x="861.9" y="631.9" font-size="13.33" text-anchor="end" font-weight="bold">0,00</text>
<text x="866.3" y="616.0" font-size="8">DESCONTO</text>
<text x="948.4" y="631.9" font-size="13.33" text-anchor="end" font-weight="bold">0,00</text>
<text x="952.8" y="616.0" font-size="8">OUTRAS DESPESAS</text>
<text x="1034.9" y="631.9" font-size="13.33" text-anchor="end" font-weight="bold">0,00</text>
<text x="1039.3" y="616.0" font-size="8">VALOR TOTAL IPI</text>
<text x="1121.3" y="631.9" font-size="13.33" text-anchor="end" font-weight="bold">0,00</text>
<text x="1125.7" y="616.0" font-size="8">V. ICMS UF DEST.</text>
<text x="1207.8" y="631.9" font-size="13.33" text-anchor="end" font-weight="bold">0,00</text>
<text x="1212.2" y="616.0" font-size="8">V. TOT. TRIB.</text>
<text x="1294.3" y="631.9" font-size="13.33" text-anchor="end" font-weight="bold">75,93</text>
<text x="1298.7" y="616.0" font-size="8">VALOR DA COFINS</text>
<text x="1380.7" y="631.9" font-size="13.33" text-anchor="end" font-weight="bold">13,46</text>
<text x="1385.1" y="616.0" font-size="8">V. TOTAL DA NOTA</text>
<text x="1467.2" y="631.9" font-size="13.33" text-anchor="end" font-weight="bold">227,00</text>
<text x="693.5" y="646.8" font-size="9.33" font-weight="bold">TRANSPORTADOR / VOLUMES TRANSPORTADOS</text>
<rect x="691.4" y="649.8" width="778.2" height="78.4" fill="none" stroke="#000" stroke-width="1.15"/>
<line x1="691.4" y1="675.4" x2="1469.6" y2="675.4" stroke="#000" stroke-width="1.15"/>
<line x1="691.4" y1="701.4" x2="1469.6" y2="701.4" stroke="#000" stroke-width="1.15"/>
<line x1="917.2" y1="649.8" x2="917.2" y2="675.4" stroke="#000" stroke-width="1.15"/>
<line x1="1033.8" y1="649.8" x2="1033.8" y2="675.4" stroke="#000" stroke-width="1.15"/>
<line x1="1150.6" y1="649.8" x2="1150.6" y2="675.4" stroke="#000" stroke-width="1.15"/>
<line x1="1267.5" y1="649.8" x2="1267.5" y2="675.4" stroke="#000" stroke-width="1.15"/>
<line x1="1297.5" y1="649.8" x2="1297.5" y2="675.4" stroke="#000" stroke-width="1.15"/>
<line x1="1033.8" y1="675.4" x2="1033.8" y2="701.4" stroke="#000" stroke-width="1.15"/>
<line x1="1267.5" y1="675.4" x2="1267.5" y2="701.4" stroke="#000" stroke-width="1.15"/>
<line x1="1298.2" y1="675.4" x2="1298.2" y2="701.4" stroke="#000" stroke-width="1.15"/>
<line x1="770.6" y1="701.4" x2="770.6" y2="728.2" stroke="#000" stroke-width="1.15"/>
<line x1="902.9" y1="701.4" x2="902.9" y2="728.2" stroke="#000" stroke-width="1.15"/>
<line x1="1035.2" y1="701.4" x2="1035.2" y2="728.2" stroke="#000" stroke-width="1.15"/>
<line x1="1167.4" y1="701.4" x2="1167.4" y2="728.2" stroke="#000" stroke-width="1.15"/>
<line x1="1322.2" y1="701.4" x2="1322.2" y2="728.2" stroke="#000" stroke-width="1.15"/>
<text x="693.5" y="656.9" font-size="8.08">NOME / RAZÃO SOCIAL</text>
<text x="919.2" y="656.9" font-size="8.08">FRETE</text>
<text x="1035.8" y="656.9" font-size="8.08">CÓDIGO ANTT</text>
<text x="1152.6" y="656.9" font-size="8.08">PLACA DO VEÍCULO</text>
<text x="1269.5" y="656.9" font-size="8.08">UF</text>
<text x="1299.5" y="656.9" font-size="8.08">CNPJ / CPF</text>
<text x="919.0" y="669.0" font-size="13.33" font-weight="bold" textLength="113.0" lengthAdjust="spacingAndGlyphs">9-Sem Transporte</text>
<text x="693.5" y="683.7" font-size="8.08">ENDEREÇO</text>
<text x="1035.8" y="683.7" font-size="8.08">MUNICÍPIO</text>
<text x="1269.5" y="683.7" font-size="8.08">UF</text>
<text x="1300.2" y="683.7" font-size="8.08">INSCRIÇÃO ESTADUAL</text>
<text x="693.5" y="710.0" font-size="8.08">QUANTIDADE</text>
<text x="772.6" y="710.0" font-size="8.08">ESPÉCIE</text>
<text x="904.9" y="710.0" font-size="8.08">MARCA</text>
<text x="1037.2" y="710.0" font-size="8.08">NUMERAÇÃO</text>
<text x="1169.4" y="710.0" font-size="8.08">PESO BRUTO</text>
<text x="1324.2" y="710.0" font-size="8.08">PESO LÍQUIDO</text>
<text x="693.5" y="741.2" font-size="9.33" font-weight="bold">DADOS DOS PRODUTOS / SERVIÇOS</text>
<rect x="691.4" y="744.0" width="778.2" height="439.0" fill="none" stroke="#000" stroke-width="1.15"/>
<line x1="691.4" y1="758.0" x2="1469.6" y2="758.0" stroke="#000" stroke-width="1.15"/>
<line x1="760.0" y1="744.0" x2="760.0" y2="1183.0" stroke="#000" stroke-width="1.15"/>
<text x="725.7" y="753.5" font-size="5.4" text-anchor="middle">CÓDIGO</text>
<line x1="958.0" y1="744.0" x2="958.0" y2="1183.0" stroke="#000" stroke-width="1.15"/>
<text x="859.0" y="753.5" font-size="5.4" text-anchor="middle">DESCRIÇÃO DO PRODUTO / SERVIÇO</text>
<line x1="1003.0" y1="744.0" x2="1003.0" y2="1183.0" stroke="#000" stroke-width="1.15"/>
<text x="980.5" y="753.5" font-size="5.4" text-anchor="middle">NCM/SH</text>
<line x1="1038.0" y1="744.0" x2="1038.0" y2="1183.0" stroke="#000" stroke-width="1.15"/>
<text x="1020.5" y="753.5" font-size="5.4" text-anchor="middle">CST</text>
<line x1="1062.0" y1="744.0" x2="1062.0" y2="1183.0" stroke="#000" stroke-width="1.15"/>
<text x="1050.0" y="753.5" font-size="5.4" text-anchor="middle">CFOP</text>
<line x1="1083.0" y1="744.0" x2="1083.0" y2="1183.0" stroke="#000" stroke-width="1.15"/>
<text x="1072.5" y="753.5" font-size="5.4" text-anchor="middle">UNID.</text>
<line x1="1122.0" y1="744.0" x2="1122.0" y2="1183.0" stroke="#000" stroke-width="1.15"/>
<text x="1102.5" y="753.5" font-size="5.4" text-anchor="middle">QTD.</text>
<line x1="1158.0" y1="744.0" x2="1158.0" y2="1183.0" stroke="#000" stroke-width="1.15"/>
<text x="1140.0" y="753.5" font-size="5.4" text-anchor="middle">VLR. UNIT.</text>
<line x1="1200.0" y1="744.0" x2="1200.0" y2="1183.0" stroke="#000" stroke-width="1.15"/>
<text x="1179.0" y="753.5" font-size="5.4" text-anchor="middle">VLR. TOTAL</text>
<line x1="1242.0" y1="744.0" x2="1242.0" y2="1183.0" stroke="#000" stroke-width="1.15"/>
<text x="1221.0" y="753.5" font-size="5.4" text-anchor="middle">BC ICMS</text>
<line x1="1283.0" y1="744.0" x2="1283.0" y2="1183.0" stroke="#000" stroke-width="1.15"/>
<text x="1262.5" y="753.5" font-size="5.4" text-anchor="middle">VLR. ICMS</text>
<line x1="1326.0" y1="744.0" x2="1326.0" y2="1183.0" stroke="#000" stroke-width="1.15"/>
<text x="1304.5" y="753.5" font-size="5.4" text-anchor="middle">VLR. IPI</text>
<line x1="1378.0" y1="744.0" x2="1378.0" y2="1183.0" stroke="#000" stroke-width="1.15"/>
<text x="1352.0" y="753.5" font-size="5.4" text-anchor="middle">ALIQ. ICMS</text>
<line x1="1418.0" y1="744.0" x2="1418.0" y2="1183.0" stroke="#000" stroke-width="1.15"/>
<text x="1398.0" y="753.5" font-size="5.4" text-anchor="middle">ALIQ. IPI</text>
<line x1="1446.0" y1="744.0" x2="1446.0" y2="1183.0" stroke="#000" stroke-width="1.15"/>
<text x="1432.0" y="753.5" font-size="5.4" text-anchor="middle">V. TRIB.</text>
<text x="725.7" y="770.0" font-size="7" text-anchor="middle">000779</text>
<text x="859.0" y="770.0" font-size="7" text-anchor="middle">T-SHIRT BRIGADEIRO OFFWHITE</text>
<text x="980.5" y="770.0" font-size="7" text-anchor="middle">61091000</text>
<text x="1020.5" y="770.0" font-size="7" text-anchor="middle">000</text>
<text x="1050.0" y="770.0" font-size="7" text-anchor="middle">5102</text>
<text x="1072.5" y="770.0" font-size="7" text-anchor="middle">UN</text>
<text x="1102.5" y="770.0" font-size="7" text-anchor="middle">1,0000</text>
<text x="1140.0" y="770.0" font-size="7" text-anchor="middle">227,0000</text>
<text x="1179.0" y="770.0" font-size="7" text-anchor="middle">227,00</text>
<text x="1221.0" y="770.0" font-size="7" text-anchor="middle">227,00</text>
<text x="1262.5" y="770.0" font-size="7" text-anchor="middle">45,40</text>
<text x="1304.5" y="770.0" font-size="7" text-anchor="middle">0,00</text>
<text x="1352.0" y="770.0" font-size="7" text-anchor="middle">20,00</text>
<text x="1398.0" y="770.0" font-size="7" text-anchor="middle">0,00</text>
<text x="1432.0" y="770.0" font-size="7" text-anchor="middle">75,93</text>
<text x="1080.0" y="790.0" font-size="40" text-anchor="middle" font-weight="bold" fill="#acacac">NFE EMITIDA EM HOMOLOGACAO</text>
<text x="1080.0" y="872.0" font-size="64" text-anchor="middle" font-weight="bold" fill="#acacac">SEM VALOR FISCAL</text>
<text x="693.5" y="1251.0" font-size="9.33" font-weight="bold">DADOS ADICIONAIS</text>
<rect x="691.4" y="1254.0" width="778.2" height="59.0" fill="none" stroke="#000" stroke-width="1.15"/>
<line x1="1208.0" y1="1254.0" x2="1208.0" y2="1313.0" stroke="#000" stroke-width="1.15"/>
<text x="693.5" y="1262.0" font-size="8.08">INFORMAÇÕES COMPLEMENTARES</text>
<text x="1210.0" y="1262.0" font-size="8.08">RESERVADO AO FISCO</text>
<text x="693.5" y="1274.0" font-size="8">Inf. Contribuinte: Trib aprox R$: 30,53 Federal, 45,40 Estadual e 0,00 Municipal. Fonte: IBPT. Operador: caixa - PDV01</text>
<text x="693.5" y="1283.0" font-size="8">Documento emitido por ME ou EPP optante pelo Simples Nacional.</text>
<text x="693.5" y="1324.0" font-size="7" font-style="italic">Impresso em 06/11/2024 as 09:44:01</text>
<text x="1469.6" y="1324.0" font-size="7" text-anchor="end" font-style="italic">Powered by ACBr</text>
      </svg>
    </div>
    <!-- sidebar -->
    <div id="side" class="a">
      <div id="thumbsel" class="a" style="top:18px"><div id="thumbpg" class="a">
        <svg class="a" style="left:0;top:0" width="108" height="152.8" viewBox="684 211 793 1122">
<rect x="691.4" y="218.5" width="778.2" height="67.5" fill="none" stroke="#000" stroke-width="6.5"/>
<line x1="1322.3" y1="218.5" x2="1322.3" y2="286.0" stroke="#000" stroke-width="6.5"/>
<line x1="691.4" y1="256.4" x2="1322.3" y2="256.4" stroke="#000" stroke-width="6.5"/>
<line x1="823.4" y1="256.4" x2="823.4" y2="286.0" stroke="#000" stroke-width="6.5"/>
<text x="693.5" y="232.7" font-size="9.33" textLength="607.5" lengthAdjust="spacingAndGlyphs">RECEBEMOS DE TERRAS DE AVENTURA INDUSTRIA DE ARTIGOS ESPORTIVOS S.A OS PRODUTOS E/OU SERVIÇOS CONSTANTES DA</text>
<text x="693.5" y="242.0" font-size="9.33" textLength="577.5" lengthAdjust="spacingAndGlyphs">NOTA FISCAL ELETRÔNICA INDICADA ABAIXO. EMISSÃO: 06/11/2024 VALOR TOTAL: R$ 227,00 DESTINATÁRIO: NF-E EMITIDA EM</text>
<text x="693.5" y="250.9" font-size="9.33" textLength="475.7" lengthAdjust="spacingAndGlyphs">AMBIENTE DE HOMOLOGACAO - SEM VALOR FISCAL - Rua Joao Paranagua, 10 Guadalupe Rio de Janeiro-RJ</text>
<text x="693.5" y="264.2" font-size="8.08">DATA DE RECEBIMENTO</text>
<text x="825.5" y="264.2" font-size="8.08">IDENTIFICAÇÃO E ASSINATURA DO RECEBEDOR</text>
<text x="1396.0" y="236.7" font-size="18.4" text-anchor="middle" font-weight="bold">NF-e</text>
<text x="1396.0" y="258.7" font-size="13.33" text-anchor="middle" font-weight="bold">Nº. 000.000.779</text>
<text x="1396.0" y="272.5" font-size="13.33" text-anchor="middle" font-weight="bold">Série 550</text>
<line x1="691.4" y1="290.4" x2="1469.6" y2="290.4" stroke="#8c8c8c" stroke-width="3" stroke-dasharray="4.4 1"/>
<rect x="691.4" y="298.0" width="778.2" height="120.4" fill="none" stroke="#000" stroke-width="6.5"/>
<line x1="1008.7" y1="298.0" x2="1008.7" y2="418.4" stroke="#000" stroke-width="6.5"/>
<line x1="1141.1" y1="298.0" x2="1141.1" y2="445.1" stroke="#000" stroke-width="6.5"/>
<line x1="1141.1" y1="358.2" x2="1469.6" y2="358.2" stroke="#000" stroke-width="6.5"/>
<line x1="1141.1" y1="388.5" x2="1469.6" y2="388.5" stroke="#000" stroke-width="6.5"/>
<text x="850.0" y="306.0" font-size="8" text-anchor="middle" font-style="italic">IDENTIFICAÇÃO DO EMITENTE</text>
<text x="850.3" y="354.7" font-size="9.33" text-anchor="middle" font-weight="bold" textLength="303.5" lengthAdjust="spacingAndGlyphs">TERRAS DE AVENTURA INDUSTRIA DE ARTIGOS ESPORTIVOS S.A</text>
<text x="849.8" y="368.6" font-size="10.67" text-anchor="middle" textLength="230.2" lengthAdjust="spacingAndGlyphs">Avenida das Americas, 7777 - LOJAS 119 E 120</text>
<text x="849.8" y="379.8" font-size="10.67" text-anchor="middle">Barra da Tijuca - 22793-081</text>
<text x="849.8" y="389.9" font-size="10.67" text-anchor="middle">Rio de Janeiro - RJ Fone/Fax:</text>
<text x="1074.7" y="319.6" font-size="17.33" text-anchor="middle" font-weight="bold">DANFE</text>
<text x="1074.7" y="330.9" font-size="10.67" text-anchor="middle">Documento Auxiliar da</text>
<text x="1074.7" y="341.8" font-size="10.67" text-anchor="middle">Nota Fiscal Eletrônica</text>
<text x="1017.8" y="360.8" font-size="10.67">0 - ENTRADA</text>
<text x="1017.8" y="372.9" font-size="10.67">1 - SAÍDA</text>
<rect x="1110.8" y="347.0" width="19.1" height="26.2" fill="none" stroke="#000" stroke-width="6.5"/>
<text x="1120.4" y="367.4" font-size="14.67" text-anchor="middle" font-weight="bold">1</text>
<text x="1074.8" y="392.3" font-size="13.33" text-anchor="middle" font-weight="bold">Nº. 000.000.779</text>
<text x="1074.6" y="404.4" font-size="13.33" text-anchor="middle" font-weight="bold">Série 550</text>
<text x="1074.5" y="414.8" font-size="10.67" text-anchor="middle" font-style="italic">Folha 1/1</text>
<path d="M1163.49 305h5.04v45.5h-5.04zM1166.55 305h4.02v45.5h-4.02zM1169.60 305h6.06v45.5h-6.06zM1174.70 305h4.02v45.5h-4.02zM1176.74 305h4.02v45.5h-4.02zM1180.81 305h5.04v45.5h-5.04zM1185.91 305h6.06v45.5h-6.06zM1189.98 305h4.02v45.5h-4.02zM1193.04 305h5.04v45.5h-5.04zM1197.12 305h5.04v45.5h-5.04zM1202.21 305h4.02v45.5h-4.02zM1205.27 305h4.02v45.5h-4.02zM1208.33 305h4.02v45.5h-4.02zM1212.40 305h4.02v45.5h-4.02zM1216.48 305h5.04v45.5h-5.04zM1219.54 305h4.02v45.5h-4.02zM1223.61 305h4.02v45.5h-4.02zM1225.65 305h7.08v45.5h-7.08zM1230.74 305h4.02v45.5h-4.02zM1232.78 305h5.04v45.5h-5.04zM1237.88 305h4.02v45.5h-4.02zM1241.95 305h4.02v45.5h-4.02zM1245.01 305h4.02v45.5h-4.02zM1249.09 305h5.04v45.5h-5.04zM1253.16 305h5.04v45.5h-5.04zM1256.22 305h5.04v45.5h-5.04zM1260.30 305h5.04v45.5h-5.04zM1264.37 305h5.04v45.5h-5.04zM1268.45 305h6.06v45.5h-6.06zM1273.54 305h4.02v45.5h-4.02zM1275.58 305h5.04v45.5h-5.04zM1279.66 305h5.04v45.5h-5.04zM1283.73 305h5.04v45.5h-5.04zM1286.79 305h6.06v45.5h-6.06zM1290.87 305h4.02v45.5h-4.02zM1294.94 305h5.04v45.5h-5.04zM1298.00 305h6.06v45.5h-6.06zM1302.07 305h4.02v45.5h-4.02zM1306.15 305h5.04v45.5h-5.04zM1309.21 305h5.04v45.5h-5.04zM1312.26 305h5.04v45.5h-5.04zM1316.34 305h5.04v45.5h-5.04zM1320.42 305h5.04v45.5h-5.04zM1323.47 305h5.04v45.5h-5.04zM1327.55 305h5.04v45.5h-5.04zM1331.62 305h5.04v45.5h-5.04zM1334.68 305h5.04v45.5h-5.04zM1338.76 305h5.04v45.5h-5.04zM1342.83 305h4.02v45.5h-4.02zM1345.89 305h5.04v45.5h-5.04zM1350.99 305h4.02v45.5h-4.02zM1354.04 305h4.02v45.5h-4.02zM1358.12 305h7.08v45.5h-7.08zM1363.21 305h4.02v45.5h-4.02zM1365.25 305h5.04v45.5h-5.04zM1369.33 305h4.02v45.5h-4.02zM1373.40 305h4.02v45.5h-4.02zM1376.46 305h6.06v45.5h-6.06zM1380.54 305h4.02v45.5h-4.02zM1383.59 305h5.04v45.5h-5.04zM1387.67 305h4.02v45.5h-4.02zM1389.71 305h4.02v45.5h-4.02zM1391.75 305h7.08v45.5h-7.08zM1398.88 305h4.02v45.5h-4.02zM1403.97 305h5.04v45.5h-5.04zM1408.05 305h4.02v45.5h-4.02zM1410.09 305h5.04v45.5h-5.04zM1413.14 305h5.04v45.5h-5.04zM1417.22 305h5.04v45.5h-5.04zM1421.30 305h4.02v45.5h-4.02zM1426.39 305h5.04v45.5h-5.04zM1430.47 305h4.02v45.5h-4.02zM1432.51 305h5.04v45.5h-5.04zM1437.60 305h6.06v45.5h-6.06zM1441.68 305h4.02v45.5h-4.02zM1443.71 305h5.04v45.5h-5.04z" fill="#000"/>
<text x="1142.9" y="366.0" font-size="8.08">CHAVE DE ACESSO</text>
<text x="1164.0" y="383.6" font-size="10.67" font-weight="bold" textLength="289.9" lengthAdjust="spacingAndGlyphs">3324 1135 9436 0400 1802 5555 0000 0007 7910 2492 7400</text>
<text x="1308.7" y="398.9" font-size="10.67" text-anchor="middle" textLength="251.5" lengthAdjust="spacingAndGlyphs">Consulta de autenticidade no portal nacional da NF-e</text>
<text x="1308.6" y="413.6" font-size="10.67" text-anchor="middle" textLength="301.3" lengthAdjust="spacingAndGlyphs">www.nfe.fazenda.gov.br/portal ou no site da Sefaz Autorizadora</text>
<line x1="691.4" y1="445.1" x2="1469.6" y2="445.1" stroke="#000" stroke-width="6.5"/>
<line x1="691.4" y1="418.4" x2="691.4" y2="471.0" stroke="#000" stroke-width="6.5"/>
<line x1="1469.6" y1="418.4" x2="1469.6" y2="471.0" stroke="#000" stroke-width="6.5"/>
<line x1="691.4" y1="471.0" x2="1469.6" y2="471.0" stroke="#000" stroke-width="6.5"/>
<text x="693.5" y="427.0" font-size="8.08">NATUREZA DA OPERAÇÃO</text>
<text x="916.0" y="442.5" font-size="13.33" text-anchor="middle" font-weight="bold">VENDA DE MERCADORIA</text>
<text x="1142.9" y="426.6" font-size="8.08">PROTOCOLO DE AUTORIZAÇÃO DE USO</text>
<text x="1178.4" y="442.5" font-size="13.33" font-weight="bold" xml:space="preserve" textLength="253.5" lengthAdjust="spacingAndGlyphs">333240000881902  -  06/11/2024 09:34:37</text>
<line x1="887.8" y1="445.1" x2="887.8" y2="471.0" stroke="#000" stroke-width="6.5"/>
<line x1="1084.5" y1="445.1" x2="1084.5" y2="471.0" stroke="#000" stroke-width="6.5"/>
<line x1="1280.5" y1="445.1" x2="1280.5" y2="471.0" stroke="#000" stroke-width="6.5"/>
<text x="693.5" y="452.9" font-size="8.08">INSCRIÇÃO ESTADUAL</text>
<text x="789.0" y="469.5" font-size="13.33" text-anchor="middle" font-weight="bold">77800271</text>
<text x="889.9" y="452.9" font-size="8.08">INSCRIÇÃO MUNICIPAL</text>
<text x="986.0" y="469.5" font-size="13.33" text-anchor="middle" font-weight="bold">0</text>
<text x="1086.5" y="452.9" font-size="8.08">INSCRIÇÃO ESTADUAL DO SUBST. TRIBUT.</text>
<text x="1282.4" y="452.9" font-size="8.08">CNPJ / CPF</text>
<text x="1374.8" y="469.5" font-size="13.33" text-anchor="middle" font-weight="bold">35.943.604/0018-02</text>
<text x="693.5" y="484.6" font-size="9.33" font-weight="bold">DESTINATÁRIO / REMETENTE</text>
<rect x="691.4" y="486.6" width="778.2" height="79.4" fill="none" stroke="#000" stroke-width="6.5"/>
<line x1="691.4" y1="512.9" x2="1469.6" y2="512.9" stroke="#000" stroke-width="6.5"/>
<line x1="691.4" y1="539.7" x2="1469.6" y2="539.7" stroke="#000" stroke-width="6.5"/>
<line x1="1167.7" y1="486.6" x2="1167.7" y2="512.9" stroke="#000" stroke-width="6.5"/>
<line x1="1345.0" y1="486.6" x2="1345.0" y2="566.0" stroke="#000" stroke-width="6.5"/>
<line x1="1057.7" y1="512.9" x2="1057.7" y2="566.0" stroke="#000" stroke-width="6.5"/>
<line x1="1220.3" y1="512.9" x2="1220.3" y2="539.7" stroke="#000" stroke-width="6.5"/>
<line x1="1087.4" y1="539.7" x2="1087.4" y2="566.0" stroke="#000" stroke-width="6.5"/>
<line x1="1216.5" y1="539.7" x2="1216.5" y2="566.0" stroke="#000" stroke-width="6.5"/>
<text x="693.5" y="495.0" font-size="8.08">NOME / RAZÃO SOCIAL</text>
<text x="693.5" y="510.8" font-size="13.33" font-weight="bold" textLength="464.7" lengthAdjust="spacingAndGlyphs">NF-E EMITIDA EM AMBIENTE DE HOMOLOGACAO - SEM VALOR FISCAL</text>
<text x="1169.7" y="495.0" font-size="8.08">CNPJ / CPF</text>
<text x="1256.2" y="510.8" font-size="13.33" text-anchor="middle" font-weight="bold">998.236.034-56</text>
<text x="1347.0" y="495.0" font-size="8.08">DATA DA EMISSÃO</text>
<text x="1407.3" y="510.8" font-size="13.33" text-anchor="middle" font-weight="bold">06/11/2024</text>
<text x="693.5" y="521.0" font-size="8.08">ENDEREÇO</text>
<text x="693.5" y="537.5" font-size="13.33" font-weight="bold" textLength="153.6" lengthAdjust="spacingAndGlyphs">Rua Joao Paranagua, 10</text>
<text x="1059.7" y="521.0" font-size="8.08">BAIRRO / DISTRITO</text>
<text x="1138.9" y="537.5" font-size="13.33" text-anchor="middle" font-weight="bold">Guadalupe</text>
<text x="1222.3" y="521.0" font-size="8.08">CEP</text>
<text x="1282.4" y="537.5" font-size="13.33" text-anchor="middle" font-weight="bold">21660-470</text>
<text x="1347.0" y="521.0" font-size="8.08" textLength="104.0" lengthAdjust="spacingAndGlyphs">DATA DA SAÍDA/ENTRADA</text>
<text x="1407.3" y="537.5" font-size="13.33" text-anchor="middle" font-weight="bold">06/11/2024</text>
<text x="693.5" y="548.0" font-size="8.08">MUNICÍPIO</text>
<text x="693.5" y="563.6" font-size="13.33" font-weight="bold">Rio de Janeiro</text>
<text x="1059.7" y="548.0" font-size="8.08">UF</text>
<text x="1072.7" y="563.6" font-size="13.33" text-anchor="middle" font-weight="bold">RJ</text>
<text x="1089.4" y="548.0" font-size="8.08">FONE / FAX</text>
<text x="1218.5" y="548.0" font-size="8.08">INSCRIÇÃO ESTADUAL</text>
<text x="1347.0" y="548.0" font-size="8.08" textLength="106.0" lengthAdjust="spacingAndGlyphs">HORA DA SAÍDA/ENTRADA</text>
<text x="1407.3" y="563.6" font-size="13.33" text-anchor="middle" font-weight="bold">09:34:34</text>
<text x="693.5" y="579.0" font-size="9.33" font-weight="bold">CÁLCULO DO IMPOSTO</text>
<rect x="691.4" y="581.3" width="778.2" height="52.5" fill="none" stroke="#000" stroke-width="6.5"/>
<line x1="691.4" y1="607.8" x2="1469.6" y2="607.8" stroke="#000" stroke-width="6.5"/>
<line x1="777.9" y1="581.3" x2="777.9" y2="633.8" stroke="#000" stroke-width="6.5"/>
<line x1="864.3" y1="581.3" x2="864.3" y2="633.8" stroke="#000" stroke-width="6.5"/>
<line x1="950.8" y1="581.3" x2="950.8" y2="633.8" stroke="#000" stroke-width="6.5"/>
<line x1="1037.3" y1="581.3" x2="1037.3" y2="633.8" stroke="#000" stroke-width="6.5"/>
<line x1="1123.7" y1="581.3" x2="1123.7" y2="633.8" stroke="#000" stroke-width="6.5"/>
<line x1="1210.2" y1="581.3" x2="1210.2" y2="633.8" stroke="#000" stroke-width="6.5"/>
<line x1="1296.7" y1="581.3" x2="1296.7" y2="633.8" stroke="#000" stroke-width="6.5"/>
<line x1="1383.1" y1="581.3" x2="1383.1" y2="633.8" stroke="#000" stroke-width="6.5"/>
<text x="693.4" y="589.1" font-size="6.4" textLength="81.3" lengthAdjust="spacingAndGlyphs">BASE DE CÁLC. DO ICMS</text>
<text x="775.5" y="605.5" font-size="13.33" text-anchor="end" font-weight="bold">227,00</text>
<text x="779.9" y="589.1" font-size="8">VALOR DO ICMS</text>
<text x="861.9" y="605.5" font-size="13.33" text-anchor="end" font-weight="bold">45,40</text>
<text x="866.3" y="589.1" font-size="6.4" textLength="81.3" lengthAdjust="spacingAndGlyphs">BASE DE CÁLC. ICMS S.T.</text>
<text x="948.4" y="605.5" font-size="13.33" text-anchor="end" font-weight="bold">0,00</text>
<text x="952.8" y="589.1" font-size="6.4" textLength="81.3" lengthAdjust="spacingAndGlyphs">VALOR DO ICMS SUBST.</text>
<text x="1034.9" y="605.5" font-size="13.33" text-anchor="end" font-weight="bold">0,00</text>
<text x="1039.3" y="589.1" font-size="8" textLength="82.0" lengthAdjust="spacingAndGlyphs">V. IMP. IMPORTAÇÃO</text>
<text x="1121.3" y="605.5" font-size="13.33" text-anchor="end" font-weight="bold">0,00</text>
<text x="1125.7" y="589.1" font-size="8">V. ICMS UF REMET.</text>
<text x="1207.8" y="605.5" font-size="13.33" text-anchor="end" font-weight="bold">0,00</text>
<text x="1212.2" y="589.1" font-size="8">V. FCP UF DEST.</text>
<text x="1294.3" y="605.5" font-size="13.33" text-anchor="end" font-weight="bold">0,00</text>
<text x="1298.7" y="589.1" font-size="8">VALOR DO PIS</text>
<text x="1380.7" y="605.5" font-size="13.33" text-anchor="end" font-weight="bold">2,92</text>
<text x="1385.1" y="589.1" font-size="8" textLength="82.0" lengthAdjust="spacingAndGlyphs">V. TOTAL PRODUTOS</text>
<text x="1467.2" y="605.5" font-size="13.33" text-anchor="end" font-weight="bold">227,00</text>
<text x="693.4" y="616.0" font-size="8">VALOR DO FRETE</text>
<text x="775.5" y="631.9" font-size="13.33" text-anchor="end" font-weight="bold">0,00</text>
<text x="779.9" y="616.0" font-size="8">VALOR DO SEGURO</text>
<text x="861.9" y="631.9" font-size="13.33" text-anchor="end" font-weight="bold">0,00</text>
<text x="866.3" y="616.0" font-size="8">DESCONTO</text>
<text x="948.4" y="631.9" font-size="13.33" text-anchor="end" font-weight="bold">0,00</text>
<text x="952.8" y="616.0" font-size="8">OUTRAS DESPESAS</text>
<text x="1034.9" y="631.9" font-size="13.33" text-anchor="end" font-weight="bold">0,00</text>
<text x="1039.3" y="616.0" font-size="8">VALOR TOTAL IPI</text>
<text x="1121.3" y="631.9" font-size="13.33" text-anchor="end" font-weight="bold">0,00</text>
<text x="1125.7" y="616.0" font-size="8">V. ICMS UF DEST.</text>
<text x="1207.8" y="631.9" font-size="13.33" text-anchor="end" font-weight="bold">0,00</text>
<text x="1212.2" y="616.0" font-size="8">V. TOT. TRIB.</text>
<text x="1294.3" y="631.9" font-size="13.33" text-anchor="end" font-weight="bold">75,93</text>
<text x="1298.7" y="616.0" font-size="8">VALOR DA COFINS</text>
<text x="1380.7" y="631.9" font-size="13.33" text-anchor="end" font-weight="bold">13,46</text>
<text x="1385.1" y="616.0" font-size="8">V. TOTAL DA NOTA</text>
<text x="1467.2" y="631.9" font-size="13.33" text-anchor="end" font-weight="bold">227,00</text>
<text x="693.5" y="646.8" font-size="9.33" font-weight="bold">TRANSPORTADOR / VOLUMES TRANSPORTADOS</text>
<rect x="691.4" y="649.8" width="778.2" height="78.4" fill="none" stroke="#000" stroke-width="6.5"/>
<line x1="691.4" y1="675.4" x2="1469.6" y2="675.4" stroke="#000" stroke-width="6.5"/>
<line x1="691.4" y1="701.4" x2="1469.6" y2="701.4" stroke="#000" stroke-width="6.5"/>
<line x1="917.2" y1="649.8" x2="917.2" y2="675.4" stroke="#000" stroke-width="6.5"/>
<line x1="1033.8" y1="649.8" x2="1033.8" y2="675.4" stroke="#000" stroke-width="6.5"/>
<line x1="1150.6" y1="649.8" x2="1150.6" y2="675.4" stroke="#000" stroke-width="6.5"/>
<line x1="1267.5" y1="649.8" x2="1267.5" y2="675.4" stroke="#000" stroke-width="6.5"/>
<line x1="1297.5" y1="649.8" x2="1297.5" y2="675.4" stroke="#000" stroke-width="6.5"/>
<line x1="1033.8" y1="675.4" x2="1033.8" y2="701.4" stroke="#000" stroke-width="6.5"/>
<line x1="1267.5" y1="675.4" x2="1267.5" y2="701.4" stroke="#000" stroke-width="6.5"/>
<line x1="1298.2" y1="675.4" x2="1298.2" y2="701.4" stroke="#000" stroke-width="6.5"/>
<line x1="770.6" y1="701.4" x2="770.6" y2="728.2" stroke="#000" stroke-width="6.5"/>
<line x1="902.9" y1="701.4" x2="902.9" y2="728.2" stroke="#000" stroke-width="6.5"/>
<line x1="1035.2" y1="701.4" x2="1035.2" y2="728.2" stroke="#000" stroke-width="6.5"/>
<line x1="1167.4" y1="701.4" x2="1167.4" y2="728.2" stroke="#000" stroke-width="6.5"/>
<line x1="1322.2" y1="701.4" x2="1322.2" y2="728.2" stroke="#000" stroke-width="6.5"/>
<text x="693.5" y="656.9" font-size="8.08">NOME / RAZÃO SOCIAL</text>
<text x="919.2" y="656.9" font-size="8.08">FRETE</text>
<text x="1035.8" y="656.9" font-size="8.08">CÓDIGO ANTT</text>
<text x="1152.6" y="656.9" font-size="8.08">PLACA DO VEÍCULO</text>
<text x="1269.5" y="656.9" font-size="8.08">UF</text>
<text x="1299.5" y="656.9" font-size="8.08">CNPJ / CPF</text>
<text x="919.0" y="669.0" font-size="13.33" font-weight="bold" textLength="113.0" lengthAdjust="spacingAndGlyphs">9-Sem Transporte</text>
<text x="693.5" y="683.7" font-size="8.08">ENDEREÇO</text>
<text x="1035.8" y="683.7" font-size="8.08">MUNICÍPIO</text>
<text x="1269.5" y="683.7" font-size="8.08">UF</text>
<text x="1300.2" y="683.7" font-size="8.08">INSCRIÇÃO ESTADUAL</text>
<text x="693.5" y="710.0" font-size="8.08">QUANTIDADE</text>
<text x="772.6" y="710.0" font-size="8.08">ESPÉCIE</text>
<text x="904.9" y="710.0" font-size="8.08">MARCA</text>
<text x="1037.2" y="710.0" font-size="8.08">NUMERAÇÃO</text>
<text x="1169.4" y="710.0" font-size="8.08">PESO BRUTO</text>
<text x="1324.2" y="710.0" font-size="8.08">PESO LÍQUIDO</text>
<text x="693.5" y="741.2" font-size="9.33" font-weight="bold">DADOS DOS PRODUTOS / SERVIÇOS</text>
<rect x="691.4" y="744.0" width="778.2" height="439.0" fill="none" stroke="#000" stroke-width="6.5"/>
<line x1="691.4" y1="758.0" x2="1469.6" y2="758.0" stroke="#000" stroke-width="6.5"/>
<line x1="760.0" y1="744.0" x2="760.0" y2="1183.0" stroke="#000" stroke-width="3.2"/>
<text x="725.7" y="753.5" font-size="5.4" text-anchor="middle">CÓDIGO</text>
<line x1="958.0" y1="744.0" x2="958.0" y2="1183.0" stroke="#000" stroke-width="3.2"/>
<text x="859.0" y="753.5" font-size="5.4" text-anchor="middle">DESCRIÇÃO DO PRODUTO / SERVIÇO</text>
<line x1="1003.0" y1="744.0" x2="1003.0" y2="1183.0" stroke="#000" stroke-width="3.2"/>
<text x="980.5" y="753.5" font-size="5.4" text-anchor="middle">NCM/SH</text>
<line x1="1038.0" y1="744.0" x2="1038.0" y2="1183.0" stroke="#000" stroke-width="3.2"/>
<text x="1020.5" y="753.5" font-size="5.4" text-anchor="middle">CST</text>
<line x1="1062.0" y1="744.0" x2="1062.0" y2="1183.0" stroke="#000" stroke-width="3.2"/>
<text x="1050.0" y="753.5" font-size="5.4" text-anchor="middle">CFOP</text>
<line x1="1083.0" y1="744.0" x2="1083.0" y2="1183.0" stroke="#000" stroke-width="3.2"/>
<text x="1072.5" y="753.5" font-size="5.4" text-anchor="middle">UNID.</text>
<line x1="1122.0" y1="744.0" x2="1122.0" y2="1183.0" stroke="#000" stroke-width="3.2"/>
<text x="1102.5" y="753.5" font-size="5.4" text-anchor="middle">QTD.</text>
<line x1="1158.0" y1="744.0" x2="1158.0" y2="1183.0" stroke="#000" stroke-width="3.2"/>
<text x="1140.0" y="753.5" font-size="5.4" text-anchor="middle">VLR. UNIT.</text>
<line x1="1200.0" y1="744.0" x2="1200.0" y2="1183.0" stroke="#000" stroke-width="3.2"/>
<text x="1179.0" y="753.5" font-size="5.4" text-anchor="middle">VLR. TOTAL</text>
<line x1="1242.0" y1="744.0" x2="1242.0" y2="1183.0" stroke="#000" stroke-width="3.2"/>
<text x="1221.0" y="753.5" font-size="5.4" text-anchor="middle">BC ICMS</text>
<line x1="1283.0" y1="744.0" x2="1283.0" y2="1183.0" stroke="#000" stroke-width="3.2"/>
<text x="1262.5" y="753.5" font-size="5.4" text-anchor="middle">VLR. ICMS</text>
<line x1="1326.0" y1="744.0" x2="1326.0" y2="1183.0" stroke="#000" stroke-width="3.2"/>
<text x="1304.5" y="753.5" font-size="5.4" text-anchor="middle">VLR. IPI</text>
<line x1="1378.0" y1="744.0" x2="1378.0" y2="1183.0" stroke="#000" stroke-width="3.2"/>
<text x="1352.0" y="753.5" font-size="5.4" text-anchor="middle">ALIQ. ICMS</text>
<line x1="1418.0" y1="744.0" x2="1418.0" y2="1183.0" stroke="#000" stroke-width="3.2"/>
<text x="1398.0" y="753.5" font-size="5.4" text-anchor="middle">ALIQ. IPI</text>
<line x1="1446.0" y1="744.0" x2="1446.0" y2="1183.0" stroke="#000" stroke-width="3.2"/>
<text x="1432.0" y="753.5" font-size="5.4" text-anchor="middle">V. TRIB.</text>
<text x="725.7" y="770.0" font-size="7" text-anchor="middle">000779</text>
<text x="859.0" y="770.0" font-size="7" text-anchor="middle">T-SHIRT BRIGADEIRO OFFWHITE</text>
<text x="980.5" y="770.0" font-size="7" text-anchor="middle">61091000</text>
<text x="1020.5" y="770.0" font-size="7" text-anchor="middle">000</text>
<text x="1050.0" y="770.0" font-size="7" text-anchor="middle">5102</text>
<text x="1072.5" y="770.0" font-size="7" text-anchor="middle">UN</text>
<text x="1102.5" y="770.0" font-size="7" text-anchor="middle">1,0000</text>
<text x="1140.0" y="770.0" font-size="7" text-anchor="middle">227,0000</text>
<text x="1179.0" y="770.0" font-size="7" text-anchor="middle">227,00</text>
<text x="1221.0" y="770.0" font-size="7" text-anchor="middle">227,00</text>
<text x="1262.5" y="770.0" font-size="7" text-anchor="middle">45,40</text>
<text x="1304.5" y="770.0" font-size="7" text-anchor="middle">0,00</text>
<text x="1352.0" y="770.0" font-size="7" text-anchor="middle">20,00</text>
<text x="1398.0" y="770.0" font-size="7" text-anchor="middle">0,00</text>
<text x="1432.0" y="770.0" font-size="7" text-anchor="middle">75,93</text>
<text x="1080.0" y="790.0" font-size="40" text-anchor="middle" font-weight="bold" fill="#acacac">NFE EMITIDA EM HOMOLOGACAO</text>
<text x="1080.0" y="872.0" font-size="64" text-anchor="middle" font-weight="bold" fill="#acacac">SEM VALOR FISCAL</text>
<text x="693.5" y="1251.0" font-size="9.33" font-weight="bold">DADOS ADICIONAIS</text>
<rect x="691.4" y="1254.0" width="778.2" height="59.0" fill="none" stroke="#000" stroke-width="6.5"/>
<line x1="1208.0" y1="1254.0" x2="1208.0" y2="1313.0" stroke="#000" stroke-width="6.5"/>
<text x="693.5" y="1262.0" font-size="8.08">INFORMAÇÕES COMPLEMENTARES</text>
<text x="1210.0" y="1262.0" font-size="8.08">RESERVADO AO FISCO</text>
<text x="693.5" y="1274.0" font-size="8">Inf. Contribuinte: Trib aprox R$: 30,53 Federal, 45,40 Estadual e 0,00 Municipal. Fonte: IBPT. Operador: caixa - PDV01</text>
<text x="693.5" y="1283.0" font-size="8">Documento emitido por ME ou EPP optante pelo Simples Nacional.</text>
<text x="693.5" y="1324.0" font-size="7" font-style="italic">Impresso em 06/11/2024 as 09:44:01</text>
<text x="1469.6" y="1324.0" font-size="7" text-anchor="end" font-style="italic">Powered by ACBr</text>
        </svg>
      </div></div>
      <div id="thumblab" class="a" style="top:187px">1</div>
    </div>
    <!-- scrollbar -->
    <div id="sbar" class="a">
      <svg class="a" style="left:3px;top:3px" width="9" height="8" viewBox="0 0 9 8"><path d="M1 6.5 4.5 2.5 8 6.5" fill="none" stroke="#a3a3a3" stroke-width="1.7"/></svg>
      <div id="sthumb" class="a"></div>
      <svg class="a" style="left:3px;top:521px" width="9" height="8" viewBox="0 0 9 8"><path d="M1 1.5 4.5 5.5 8 1.5" fill="none" stroke="#505050" stroke-width="1.7"/></svg>
    </div>
    <!-- toolbar -->
    <div id="vtb" class="a">
      <svg class="a" style="left:23px;top:21px" width="19" height="14" viewBox="0 0 19 14"><path d="M.6 1h16.8v2H.6zM.6 6h16.8v2H.6zM.6 11h16.8v2H.6z" fill="#fff"/></svg>
      <div id="fname" class="a">33241135943604001802555500000007791024927400-Prot333240000881902.pdf</div>
      <div class="a tbox" style="left:612px;width:23px">1</div>
      <div class="a" style="left:636px;top:20px;width:13px;text-align:center;font-size:12.3px;line-height:19px;color:#fff">/</div><div class="a" style="left:649px;top:20px;width:13px;text-align:center;font-size:12.3px;line-height:19px;color:#fff;-webkit-text-stroke:.2px #fff">1</div>
      <div class="a sep" style="left:683px"></div>
      <div class="a" style="left:697.6px;top:27px;width:12.6px;height:1.600px;background:#fff"></div>
      <div class="a tbox" style="left:724px;width:44px">100%</div>
      <div class="a" style="left:782px;top:27px;width:12px;height:1.600px;background:#fff"></div>
      <div class="a" style="left:787.200px;top:21.800px;width:1.600px;height:12px;background:#fff"></div>
      <div class="a sep" style="left:808px"></div>
      <!-- fit -->
      <svg class="a" style="left:826px;top:18px" width="22" height="20" viewBox="1016 170 22 20"><rect x="1018.85" y="173.15" width="16.3" height="13.7" rx="1.6" fill="none" stroke="#fff" stroke-width="1.7"/><path d="M1024.6 178.1 1027 175.2 1029.4 178.1zM1024.6 182.1 1027 185 1029.4 182.1z" fill="#fff"/></svg>
      <!-- rotate -->
      <svg class="a" style="left:858px;top:17px" width="22" height="22" viewBox="1048 169 22 22"><path d="M1055.2 175.9 1060.3 181 1055.2 186.1 1050.1 181z" fill="none" stroke="#fff" stroke-width="1.7"/><path d="M1059.6 174.1A6.7 6.7 0 1 1 1056.9 187" fill="none" stroke="#fff" stroke-width="1.7"/><path d="M1056.6 174 1060 171 1060 177z" fill="#fff"/></svg>
      <!-- download -->
      <svg class="a" style="left:1380px;top:16px" width="26" height="24" viewBox="1570 168 26 24"><path d="M1573.9 181.6v6h18.2v-6" fill="none" stroke="#fff" stroke-width="2.1" stroke-linejoin="round"/><path d="M1583 171v12M1578.6 178.7 1583 183.2 1587.4 178.7" fill="none" stroke="#fff" stroke-width="2.1"/></svg>
      <!-- print -->
      <svg class="a" style="left:1418px;top:16px" width="24" height="24" viewBox="1608 168 24 24"><rect x="1614" y="172.1" width="10.1" height="3.6" fill="#f4f4f4"/><rect x="1610.7" y="177" width="16.6" height="7.5" rx="1.6" fill="#f4f4f4"/><rect x="1613.6" y="181" width="11" height="7.2" fill="#f4f4f4"/><rect x="1616" y="183" width="6" height="3" fill="#323639"/><circle cx="1624.7" cy="179.1" r=".8" fill="#323639"/></svg>
      <!-- more -->
      <svg class="a" style="left:1461px;top:18px" width="8" height="20" viewBox="1651 170 8 20"><circle cx="1655" cy="175" r="2" fill="#fff"/><circle cx="1655" cy="180" r="2" fill="#fff"/><circle cx="1655" cy="185" r="2" fill="#fff"/></svg>
    </div>
  </div>
  <!-- footer button -->
  <div id="fechar" class="a">
    <svg class="a" style="left:9px;top:19px" width="26" height="26" viewBox="0 0 26 26"><circle cx="13" cy="13" r="12" fill="#f6000f"/><path d="M8.8 8.8 17.2 17.2M17.2 8.8 8.8 17.2" stroke="#fff" stroke-width="2.8" stroke-linecap="round"/></svg>
    <div class="t a">Fechar<small>(ESC)</small></div>
  </div>
</div>

</body>
</html>
